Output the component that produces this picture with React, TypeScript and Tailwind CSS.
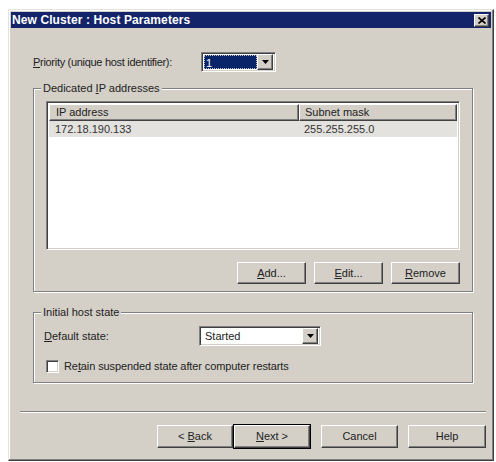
import React from 'react';

const raised =
  'border border-t-white border-l-white border-r-[#404040] border-b-[#404040] shadow-[inset_-1px_-1px_0_#808080]';
const sunken =
  'border border-t-[#808080] border-l-[#808080] border-r-white border-b-white shadow-[inset_1px_1px_0_#404040,inset_-1px_-1px_0_#d4d0c8]';

const Ul: React.FC<{ children: React.ReactNode }> = ({ children }) => <span className="underline underline-offset-[1px]">{children}</span>;

const ArrowBtn: React.FC = () => (
  <div className={`${raised} bg-[#d4d0c8] w-[16px] h-[16px] flex items-center justify-center`}>
    <svg width="7" height="4" viewBox="0 0 7 4">
      <path d="M0 0h7L3.5 4z" fill="#000" />
    </svg>
  </div>
);

const Button: React.FC<{ children: React.ReactNode; w: string; h: string; isDefault?: boolean }> = ({ children, w, h, isDefault }) => (
  <button
    className={`${w} ${h} bg-[#d4d0c8] flex items-center justify-center text-[11px] text-[#222] ${
      isDefault ? 'outline outline-1 outline-black ' : ''
    }${raised}`}
  >
    <span className="whitespace-pre">{children}</span>
  </button>
);

const GroupBox: React.FC<{ label: React.ReactNode; className: string; children: React.ReactNode }> = ({ label, className, children }) => (
  <div className={`relative border border-[#808080] shadow-[1px_1px_0_white,inset_1px_1px_0_white] ${className}`}>
    <div className="absolute -top-[8px] left-[7px] px-[2px] bg-[#d4d0c8] text-[11px] leading-[14px] text-[#222]">{label}</div>
    {children}
  </div>
);

export default function App() {
  return (
    <div className="w-[496px] h-[462px] bg-white pt-[9px] pl-[8px]" style={{ fontFamily: '"Liberation Sans", Arial, sans-serif' }}>
      <div className="w-[486px] h-[452px] bg-[#d4d0c8] border border-t-[#e4e2dc] border-l-[#e4e2dc] border-r-[#404040] border-b-[#404040] shadow-[inset_-1px_-1px_0_#808080,inset_1px_1px_0_white] p-[2px] flex flex-col">
        {/* title bar */}
        <div className="h-[16px] bg-[#14246a] flex items-center justify-between pl-[1px] pr-[2px]">
          <span className="text-white font-bold text-[12px] leading-none tracking-[0.1px]">New Cluster : Host Parameters</span>
          <div className={`${raised} bg-[#d4d0c8] w-[15px] h-[13px] flex items-center justify-center`}>
            <svg width="8" height="7" viewBox="0 0 8 7">
              <path d="M0.5 0.5l7 6M7.5 0.5l-7 6" stroke="#000" strokeWidth="1.6" />
            </svg>
          </div>
        </div>

        <div className="pl-[22px] pr-[18px] pt-[24px] flex flex-col">
          {/* priority */}
          <div className="h-[20px] flex items-center">
            <span className="w-[168px] text-[11px] tracking-[-0.3px] text-[#222]">
              <Ul>P</Ul>riority (unique host identifier):
            </span>
            <div className={`${sunken} bg-white w-[75px] h-[20px] flex items-center p-[2px]`}>
              <div className="flex-1 h-full bg-[#0a246a] border border-dotted border-[#c0c0c0] text-white text-[11px] leading-[14px] pl-[1px]">1</div>
              <ArrowBtn />
            </div>
          </div>

          {/* dedicated ip */}
          <GroupBox label={<>Dedicated <Ul>I</Ul>P addresses</>} className="mt-[16px] h-[204px] px-[12px] pt-[12px]">
            <div className={`${sunken} bg-white h-[149px] p-[2px] flex flex-col`}>
              <div className="flex h-[17px] text-[11px] text-[#222]">
                <div className={`${raised} bg-[#d4d0c8] w-[250px] flex items-center pl-[6px]`}>IP address</div>
                <div className={`${raised} bg-[#d4d0c8] flex-1 flex items-center pl-[5px]`}>Subnet mask</div>
              </div>
              <div className="flex h-[16px] bg-[#e4e2de] text-[11px] text-[#333] items-center">
                <div className="w-[250px] pl-[6px]">172.18.190.133</div>
                <div className="pl-[5px]">255.255.255.0</div>
              </div>
            </div>
            <div className="mt-[12px] flex justify-end gap-[8px]">
              <Button w="w-[69px]" h="h-[22px]">
                <Ul>A</Ul>dd...
              </Button>
              <Button w="w-[69px]" h="h-[22px]">
                <Ul>E</Ul>dit...
              </Button>
              <Button w="w-[69px]" h="h-[22px]">
                <Ul>R</Ul>emove
              </Button>
            </div>
          </GroupBox>

          {/* initial host state */}
          <GroupBox label="Initial host state" className="mt-[20px] h-[71px] pt-[13px]">
            <div className="flex items-center h-[20px] pl-[10px]">
              <span className="w-[155px] text-[11px] text-[#222]">
                <Ul>D</Ul>efault state:
              </span>
              <div className={`${sunken} bg-white w-[122px] h-[20px] flex items-center p-[2px]`}>
                <div className="flex-1 text-[11px] text-[#222] pl-[3px]">Started</div>
                <ArrowBtn />
              </div>
            </div>
            <div className="mt-[14px] flex items-center pl-[12px] h-[13px]">
              <div className={`${sunken} bg-white w-[13px] h-[13px]`} />
              <span className="ml-[5px] text-[11px] tracking-[-0.1px] text-[#222]">
                Re<Ul>t</Ul>ain suspended state after computer restarts
              </span>
            </div>
          </GroupBox>
        </div>

        {/* separator */}
        <div className="mt-[28px] ml-[9px] mr-[5px] h-[2px] border-t border-t-[#808080] border-b border-b-white" />

        {/* wizard buttons */}
        <div className="mt-[12px] flex justify-end pr-[5px]">
          <Button w="w-[76px]" h="h-[23px]">
            &lt; <Ul>B</Ul>ack
          </Button>
          <div className="ml-[1px]">
            <Button w="w-[76px]" h="h-[23px]" isDefault>
              <Ul>N</Ul>ext &gt;
            </Button>
          </div>
          <div className="ml-[11px]">
            <Button w="w-[77px]" h="h-[23px]">Cancel</Button>
          </div>
          <div className="ml-[10px]">
            <Button w="w-[78px]" h="h-[23px]">Help</Button>
          </div>
        </div>
      </div>
    </div>
  );
}
